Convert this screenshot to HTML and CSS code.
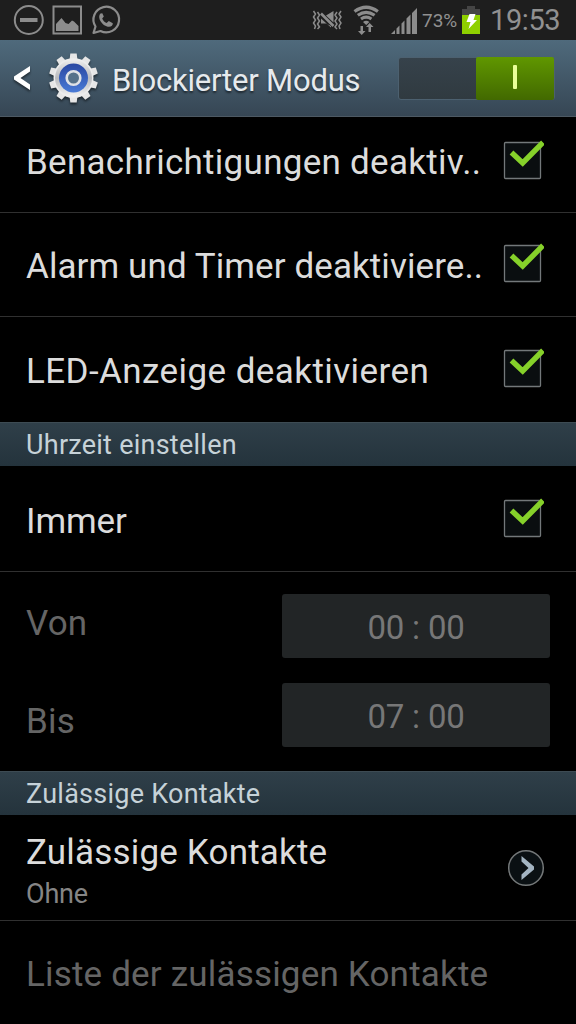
FILE: index.html
```html
<!DOCTYPE html>
<html lang="de">
<head>
    <meta charset="UTF-8">
    <meta name="viewport" content="width=device-width, initial-scale=1.0">
    <title>Blockierter Modus</title>
    <link rel="stylesheet" href="styles.css">
</head>
<body>
    <!-- Status bar -->
    <div class="statusbar">
        <svg class="notifications" width="110" height="32" viewBox="12 4 110 32" fill="none" stroke="#8c8c8c" stroke-width="2">
            <circle cx="28.800" cy="20" r="14"/>
            <path d="M20 20h17.500" stroke-width="4"/>
            <rect x="53.500" y="6.500" width="27.500" height="27"/>
            <path d="M56 31v-7l5.500-6 4 5 3 1 3.500-3.500 2 1 4.500 4.500v5z" fill="#8c8c8c" stroke="none"/>
            <path d="M93.500 33l2-6.500A12.800 12.800 0 1 1 100.500 31z" stroke-linejoin="round" stroke-width="2.200"/>
            <path d="M100.500 13.500c-4 4 2 13 8.500 13.300 2.500 0 4-2 3.800-3.600l-4-2.200-2.200 2c-2-.8-3.800-2.800-4.400-4.600l1.600-2-1.500-3.200z" fill="#8c8c8c" stroke="none"/>
        </svg>
        <div class="status-right">
            <svg width="108" height="32" viewBox="310 4 108 32" fill="#8c8c8c">
                <!-- vibrate / mute -->
                <g fill="none" stroke="#8c8c8c" stroke-width="1.500">
                    <path d="M313.500 11l2 3-2 3 2 3-2 3 2 3-1 3M317.500 12l2 3-2 3 2 3-2 3 2 3-2 2M341 11l-2 3 2 3-2 3 2 3-2 3 1 3M337 12l-2 3 2 3-2 3 2 3-2 3 2 2"/>
                </g>
                <path d="M321 18.500l10 9v-1.500l-5-2.500h-5zM326 15.500l7.500-4.500v11.500z"/>
                <path d="M321 13.500l12.500 12.500" stroke="#8c8c8c" stroke-width="2.600"/>
                <!-- wifi -->
                <g fill="none" stroke="#8c8c8c" stroke-width="3.200">
                    <path d="M354.500 11.500q11.700-8.500 23.400 0M357.800 15.300q8.400-6 16.800 0M361 19q5.200-3.600 10.400 0"/>
                </g>
                <path d="M363 22q3.200-2.500 6.400 0l-3.200 3z"/>
                <path d="M360.500 26h2.500v5h2.500l-3.800 4-3.700-4h2.500zM368.500 32h2.500v-5h2.500l-3.800-4-3.700 4h2.500z"/>
                <!-- signal -->
                <path d="M391 34l4-4v4zM396.500 28.500l3-3V34h-3zM401.500 23.500l3-3V34h-3zM406.500 18.500l4-4V34h-4zM412 13l5-5v26h-5z"/>
            </svg>
            <span class="percent">73%</span>
            <svg class="battery" width="20" height="32" viewBox="461 4 20 32">
                <path d="M467 6h8v3h5v6h-18V9h5z" fill="#454545"/>
                <path d="M462 15h18v19h-18z" fill="#8fd000"/>
                <path d="M469.500 14h6l-2 6h3.500l-8.500 9 2-7h-4z" fill="#fff"/>
            </svg>
            <span class="clock">19:53</span>
        </div>
    </div>

    <!-- Title bar -->
    <div class="titlebar">
        <svg class="back" width="18" height="28" viewBox="0 0 18 28">
            <path d="M17 2v5.500L7.500 14l9.500 6.500V26L1 15.500v-3z" fill="#fff"/>
        </svg>
        <svg class="gear" width="52" height="52" viewBox="-26.500 -26 52 52">
            <defs>
                <linearGradient id="metal" x1="0" y1="0" x2="0" y2="1">
                    <stop offset="0" stop-color="#ededed"/>
                    <stop offset=".5" stop-color="#b9babd"/>
                    <stop offset="1" stop-color="#f2f2f2"/>
                </linearGradient>
                <linearGradient id="blue" x1="0" y1="0" x2="0" y2="1">
                    <stop offset="0" stop-color="#2947a2"/>
                    <stop offset="1" stop-color="#4a7bd6"/>
                </linearGradient>
                <path id="tooth" d="M-4-18l.8-6.500h6.400L4-18z"/>
            </defs>
            <g fill="#e6e6e6">
                <use href="#tooth"/>
                <use href="#tooth" transform="rotate(36)"/>
                <use href="#tooth" transform="rotate(72)"/>
                <use href="#tooth" transform="rotate(108)"/>
                <use href="#tooth" transform="rotate(144)"/>
                <use href="#tooth" transform="rotate(180)"/>
                <use href="#tooth" transform="rotate(216)"/>
                <use href="#tooth" transform="rotate(252)"/>
                <use href="#tooth" transform="rotate(288)"/>
                <use href="#tooth" transform="rotate(324)"/>
            </g>
            <circle r="20" fill="#ececec"/>
            <circle r="18.500" fill="url(#metal)"/>
            <circle r="14.500" fill="url(#blue)"/>
            <circle r="6.800" fill="#56728a" stroke="#dfe2e6" stroke-width="2.600"/>
        </svg>
        <h1>Blockierter Modus</h1>
        <div class="switch"><div class="switch-on"><span></span></div></div>
    </div>

    <div class="row first">
        <span class="label wide">Benachrichtigungen deaktiv..</span>
        <svg class="check" width="44" height="44" viewBox="0 0 44 44"><use href="#checkbox"/></svg>
    </div>
    <div class="row">
        <span class="label alarm">Alarm und Timer deaktiviere..</span>
        <svg class="check" width="44" height="44" viewBox="0 0 44 44"><use href="#checkbox"/></svg>
    </div>
    <div class="row last">
        <span class="label wider">LED-Anzeige deaktivieren</span>
        <svg class="check" width="44" height="44" viewBox="0 0 44 44">
            <g id="checkbox">
                <rect x="4.500" y="6.500" width="36" height="36" rx="1" fill="#0a0e10" stroke="#73787a" stroke-width="1.300"/>
                <path d="M11.500 16.500l11.200 10.500L43 6.500" fill="none" stroke="#86d12a" stroke-width="5.400"/>
            </g>
        </svg>
    </div>

    <div class="section">Uhrzeit einstellen</div>
    <div class="row immer">
        <span class="label">Immer</span>
        <svg class="check" width="44" height="44" viewBox="0 0 44 44"><use href="#checkbox"/></svg>
    </div>
    <div class="times">
        <div class="time-row">
            <span class="label">Von</span>
            <div class="time">00 : 00</div>
        </div>
        <div class="time-row to">
            <span class="label">Bis</span>
            <div class="time">07 : 00</div>
        </div>
    </div>

    <div class="section">Zulässige Kontakte</div>
    <div class="row">
        <div class="two-lines">
            <span class="label">Zulässige Kontakte</span>
            <span class="sub">Ohne</span>
        </div>
        <svg class="arrow" width="38" height="38" viewBox="-19 -19 38 38">
            <circle r="17.300" fill="#0a1013" stroke="#747879" stroke-width="1.500"/>
            <path d="M-4.500-12L8-1.500v3L-4.500 12V6.500L2.500 0l-7-6.500z" fill="#a3b4c2"/>
        </svg>
    </div>
    <div class="row disabled">
        <span class="label">Liste der zulässigen Kontakte</span>
    </div>
</body>
</html>
```
FILE: styles.css
```css
* {
    box-sizing: border-box;
}
body {
    margin: 0;
    height: 1024px;
    overflow: hidden;
    background-color: #000;
    font-family: Roboto, Arial, sans-serif;
    color: #dcdcdc;
    white-space: nowrap;
}
svg {
    display: block;
    flex-shrink: 0;
}
.statusbar {
    display: flex;
    justify-content: space-between;
    align-items: center;
    height: 40px;
    padding: 0 16px 0 12px;
    background-color: #1e1e1e;
    color: #919191;
}
.status-right {
    display: flex;
    align-items: center;
}
.percent {
    width: 43px;
    padding: 1px 0 0 4px;
    font-size: 19px;
}
.clock {
    width: 79px;
    padding-left: 9px;
    font-size: 29px;
    letter-spacing: -0.4px;
    line-height: 40px;
}
.titlebar {
    display: flex;
    align-items: center;
    height: 77px;
    padding: 0 21px 0 13px;
    background: linear-gradient(#4f6a7c, #364654);
    border-bottom: 1px solid #4d5963;
}
.back, .gear {
    filter: drop-shadow(0 2px 1px rgba(0, 0, 0, 0.5));
}
.gear {
    margin-left: 16px;
}
h1 {
    margin: 4px 0 0 13px;
    font-size: 31px;
    font-weight: normal;
    letter-spacing: -0.2px;
    color: #e6eaed;
    text-shadow: 0 2px 2px rgba(0, 0, 0, 0.5);
}
.switch {
    display: flex;
    justify-content: flex-end;
    width: 157px;
    height: 43px;
    margin-left: auto;
    background: linear-gradient(#36424b, #303a40);
    border: 1px solid #4c606f;
    border-radius: 3px;
}
.switch-on {
    display: flex;
    justify-content: center;
    width: 78px;
    height: 43px;
    margin-top: -1px;
    padding-top: 8px;
    background: linear-gradient(#609700, #426900);
    border-radius: 2px;
}
.switch-on span {
    width: 4px;
    height: 24px;
    border-radius: 1px;
    background-color: #eaff98;
}
.row {
    display: flex;
    justify-content: space-between;
    align-items: center;
    height: 104px;
    padding: 0 32px 0 26px;
    border-bottom: 1px solid #303030;
}
.row .label {
    padding-top: 4px;
}
.check {
    margin-bottom: 7px;
}
.first {
    height: 96px;
    padding-bottom: 7px;
}
.last {
    height: 105px;
    border-bottom: none;
}
.label {
    font-size: 35px;
    line-height: 42px;
    letter-spacing: 0.18px;
}
.alarm {
    letter-spacing: 0.08px;
}
.wide {
    letter-spacing: 0.28px;
}
.wider {
    letter-spacing: 0.42px;
}
.section {
    height: 44px;
    padding-left: 26px;
    background: linear-gradient(#2f3f49, #24333c);
    border-top: 1px solid #3d4b53;
    color: #c6d2d8;
    font-size: 27px;
    letter-spacing: 0.25px;
    line-height: 44px;
}
.section + .row {
    height: 106px;
}
.immer {
    padding-top: 2px;
}
.immer .label {
    letter-spacing: -0.1px;
}
.times {
    height: 199px;
    padding: 22px 26px 0;
    color: #656565;
}
.time-row {
    display: flex;
    justify-content: space-between;
    align-items: center;
    height: 64px;
}
.time-row .label {
    margin-bottom: 5px;
}
.to {
    margin-top: 25px;
}
.to .label {
    margin: 14px 0 0;
}
.time {
    width: 268px;
    height: 64px;
    background-color: #222526;
    border-radius: 3px;
    color: #777;
    font-size: 33px;
    letter-spacing: -0.2px;
    line-height: 67px;
    text-align: center;
}
.two-lines {
    display: flex;
    flex-direction: column;
    padding-top: 6px;
}
.sub {
    color: #858585;
    font-size: 27px;
    letter-spacing: -0.2px;
    line-height: 40px;
}
.arrow {
    margin: 1px -1px 0 0;
}
.disabled {
    border: none;
    color: #656565;
}
```
